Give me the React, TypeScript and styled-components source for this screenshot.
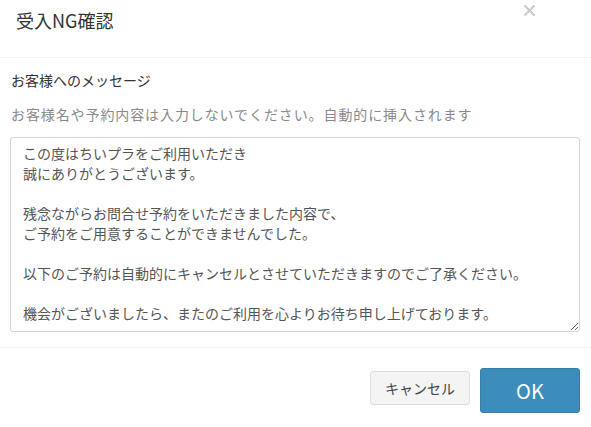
import React from "react";
import styled, { createGlobalStyle } from "styled-components";

const GlobalStyle = createGlobalStyle`
  html, body {
    margin: 0;
    padding: 0;
    background: #ffffff;
    font-family: "Noto Sans CJK JP", "Noto Sans", sans-serif;
  }
`;

const Modal = styled.div`
  width: 591px;
  height: 427px;
  background: #fff;
  display: flex;
  flex-direction: column;
  box-sizing: border-box;
`;

const Header = styled.div`
  height: 58px;
  box-sizing: border-box;
  display: flex;
  justify-content: space-between;
  align-items: flex-start;
  padding: 0 55px 0 16px;
  border-bottom: 1px solid #f4f4f4;
`;

const Title = styled.h4`
  margin: 7px 0 0;
  font-size: 18px;
  line-height: 26px;
  font-weight: 400;
  color: #333;
`;

const CloseButton = styled.button`
  margin-top: 4px;
  padding: 0;
  border: 0;
  background: transparent;
  width: 13px;
  height: 13px;
  display: flex;
  cursor: pointer;
`;

const Body = styled.div`
  padding: 12px 11px 0 10px;
  display: flex;
  flex-direction: column;
`;

const Label = styled.label`
  font-size: 14px;
  line-height: 20px;
  color: #333;
  padding-left: 1px;
`;

const Hint = styled.p`
  margin: 14px 0 13px;
  font-size: 14px;
  line-height: 20px;
  letter-spacing: 0.9px;
  color: #8a8a8a;
  padding-left: 1px;
`;

const MessageArea = styled.textarea`
  width: 100%;
  height: 195px;
  box-sizing: border-box;
  padding: 5px 12px 5px;
  border: 1px solid #d2d6de;
  border-radius: 3px;
  font-family: "Noto Sans CJK JP", "Noto Sans", sans-serif;
  font-size: 14px;
  line-height: 20px;
  color: #555;
  outline: none;
  overflow: hidden;
`;

const Footer = styled.div`
  margin-top: 15px;
  border-top: 1px solid #f4f4f4;
  padding: 20px 11px 0 0;
  display: flex;
  justify-content: flex-end;
  align-items: flex-start;
  gap: 10px;
`;

const Button = styled.button<{ $primary?: boolean }>`
  width: 100px;
  box-sizing: border-box;
  border-radius: 3px;
  cursor: pointer;
  font-family: "Noto Sans CJK JP", "Noto Sans", sans-serif;
  ${({ $primary }) =>
    $primary
      ? `
    height: 45px;
    background: #3c8dbc;
    border: 1px solid #367fa9;
    color: #fff;
    font-size: 20px;
  `
      : `
    margin-top: 3px;
    height: 34px;
    background: #f4f4f4;
    border: 1px solid #ddd;
    color: #444;
    font-size: 14px;
  `}
`;

const message = `この度はちいプラをご利用いただき
誠にありがとうございます。

残念ながらお問合せ予約をいただきました内容で、
ご予約をご用意することができませんでした。

以下のご予約は自動的にキャンセルとさせていただきますのでご了承ください。

機会がございましたら、またのご利用を心よりお待ち申し上げております。`;

export default function App() {
  return (
    <>
      <GlobalStyle />
      <Modal>
        <Header>
          <Title>受入NG確認</Title>
          <CloseButton aria-label="close">
            <svg width="13" height="13" viewBox="0 0 13 13">
              <path d="M1.5 1.5 L11.5 11.5 M11.5 1.5 L1.5 11.5" stroke="#c8c8c8" strokeWidth="2" />
            </svg>
          </CloseButton>
        </Header>
        <Body>
          <Label>お客様へのメッセージ</Label>
          <Hint>お客様名や予約内容は入力しないでください。自動的に挿入されます</Hint>
          <MessageArea defaultValue={message} />
        </Body>
        <Footer>
          <Button>キャンセル</Button>
          <Button $primary>OK</Button>
        </Footer>
      </Modal>
    </>
  );
}
